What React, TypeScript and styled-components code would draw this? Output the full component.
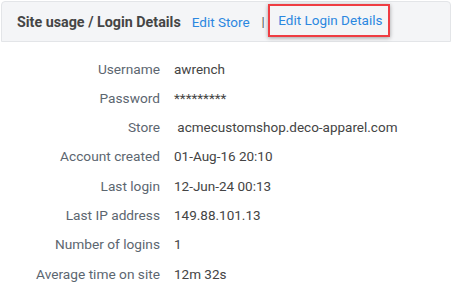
import React from 'react';
import styled, { createGlobalStyle } from 'styled-components';

const GlobalStyle = createGlobalStyle`
  body {
    margin: 0;
    background: #fff;
    font-family: Roboto, "Liberation Sans", Arial, sans-serif;
  }
`;

const rows: [string, string][] = [
  ['Username', 'awrench'],
  ['Password', '*********'],
  ['Store', ' acmecustomshop.deco-apparel.com'],
  ['Account created', '01-Aug-16 20:10'],
  ['Last login', '12-Jun-24 00:13'],
  ['Last IP address', '149.88.101.13'],
  ['Number of logins', '1'],
  ['Average time on site', '12m 32s'],
];

const App = () => (
  <>
    <GlobalStyle />
    <Panel>
      <Header>
        <Title>Site usage / Login Details</Title>
        <Link>Edit Store</Link>
        <Divider>|</Divider>
        <Highlight>
          <Link>Edit Login Details</Link>
        </Highlight>
      </Header>
      <Details>
        {rows.map(([label, value]) => (
          <React.Fragment key={label}>
            <Label>{label}</Label>
            <Value>{value}</Value>
          </React.Fragment>
        ))}
      </Details>
    </Panel>
  </>
);

const Panel = styled.div`
  width: 453px;
  height: 300px;
  padding: 1px 2px 0 1px;
  box-sizing: border-box;
`;

const Header = styled.div`
  height: 41px;
  box-sizing: border-box;
  display: flex;
  align-items: center;
  padding-left: 15px;
  background: #f4f5f7;
  border: 1px solid #e3e5e8;
  border-radius: 4px 4px 0 0;
`;

const Title = styled.span`
  font-size: 14.3px;
  font-weight: bold;
  color: #454545;
  margin-right: 11px;
`;

const Link = styled.span`
  font-size: 13.5px;
  color: #2b87e0;
`;

const Divider = styled.span`
  font-size: 13px;
  color: #555;
  margin: 0 3px 0 12px;
`;

const Highlight = styled.div`
  height: 33px;
  box-sizing: border-box;
  display: flex;
  align-items: center;
  padding: 0 6px 0 8.5px;
  border: 2.5px solid #ef3d43;
  box-shadow: 0 1px 4px rgba(0, 0, 0, 0.35);
  margin-bottom: 3px;
`;

const Details = styled.div`
  display: grid;
  grid-template-columns: 159px 1fr;
  column-gap: 14px;
  padding-top: 18.5px;
  grid-auto-rows: 29.3px;
`;

const Label = styled.div`
  text-align: right;
  color: #5c6670;
  font-size: 13.7px;
  line-height: 16px;
`;

const Value = styled.div`
  color: #444;
  font-size: 13.5px;
  line-height: 16px;
  white-space: pre;
`;

export default App;
